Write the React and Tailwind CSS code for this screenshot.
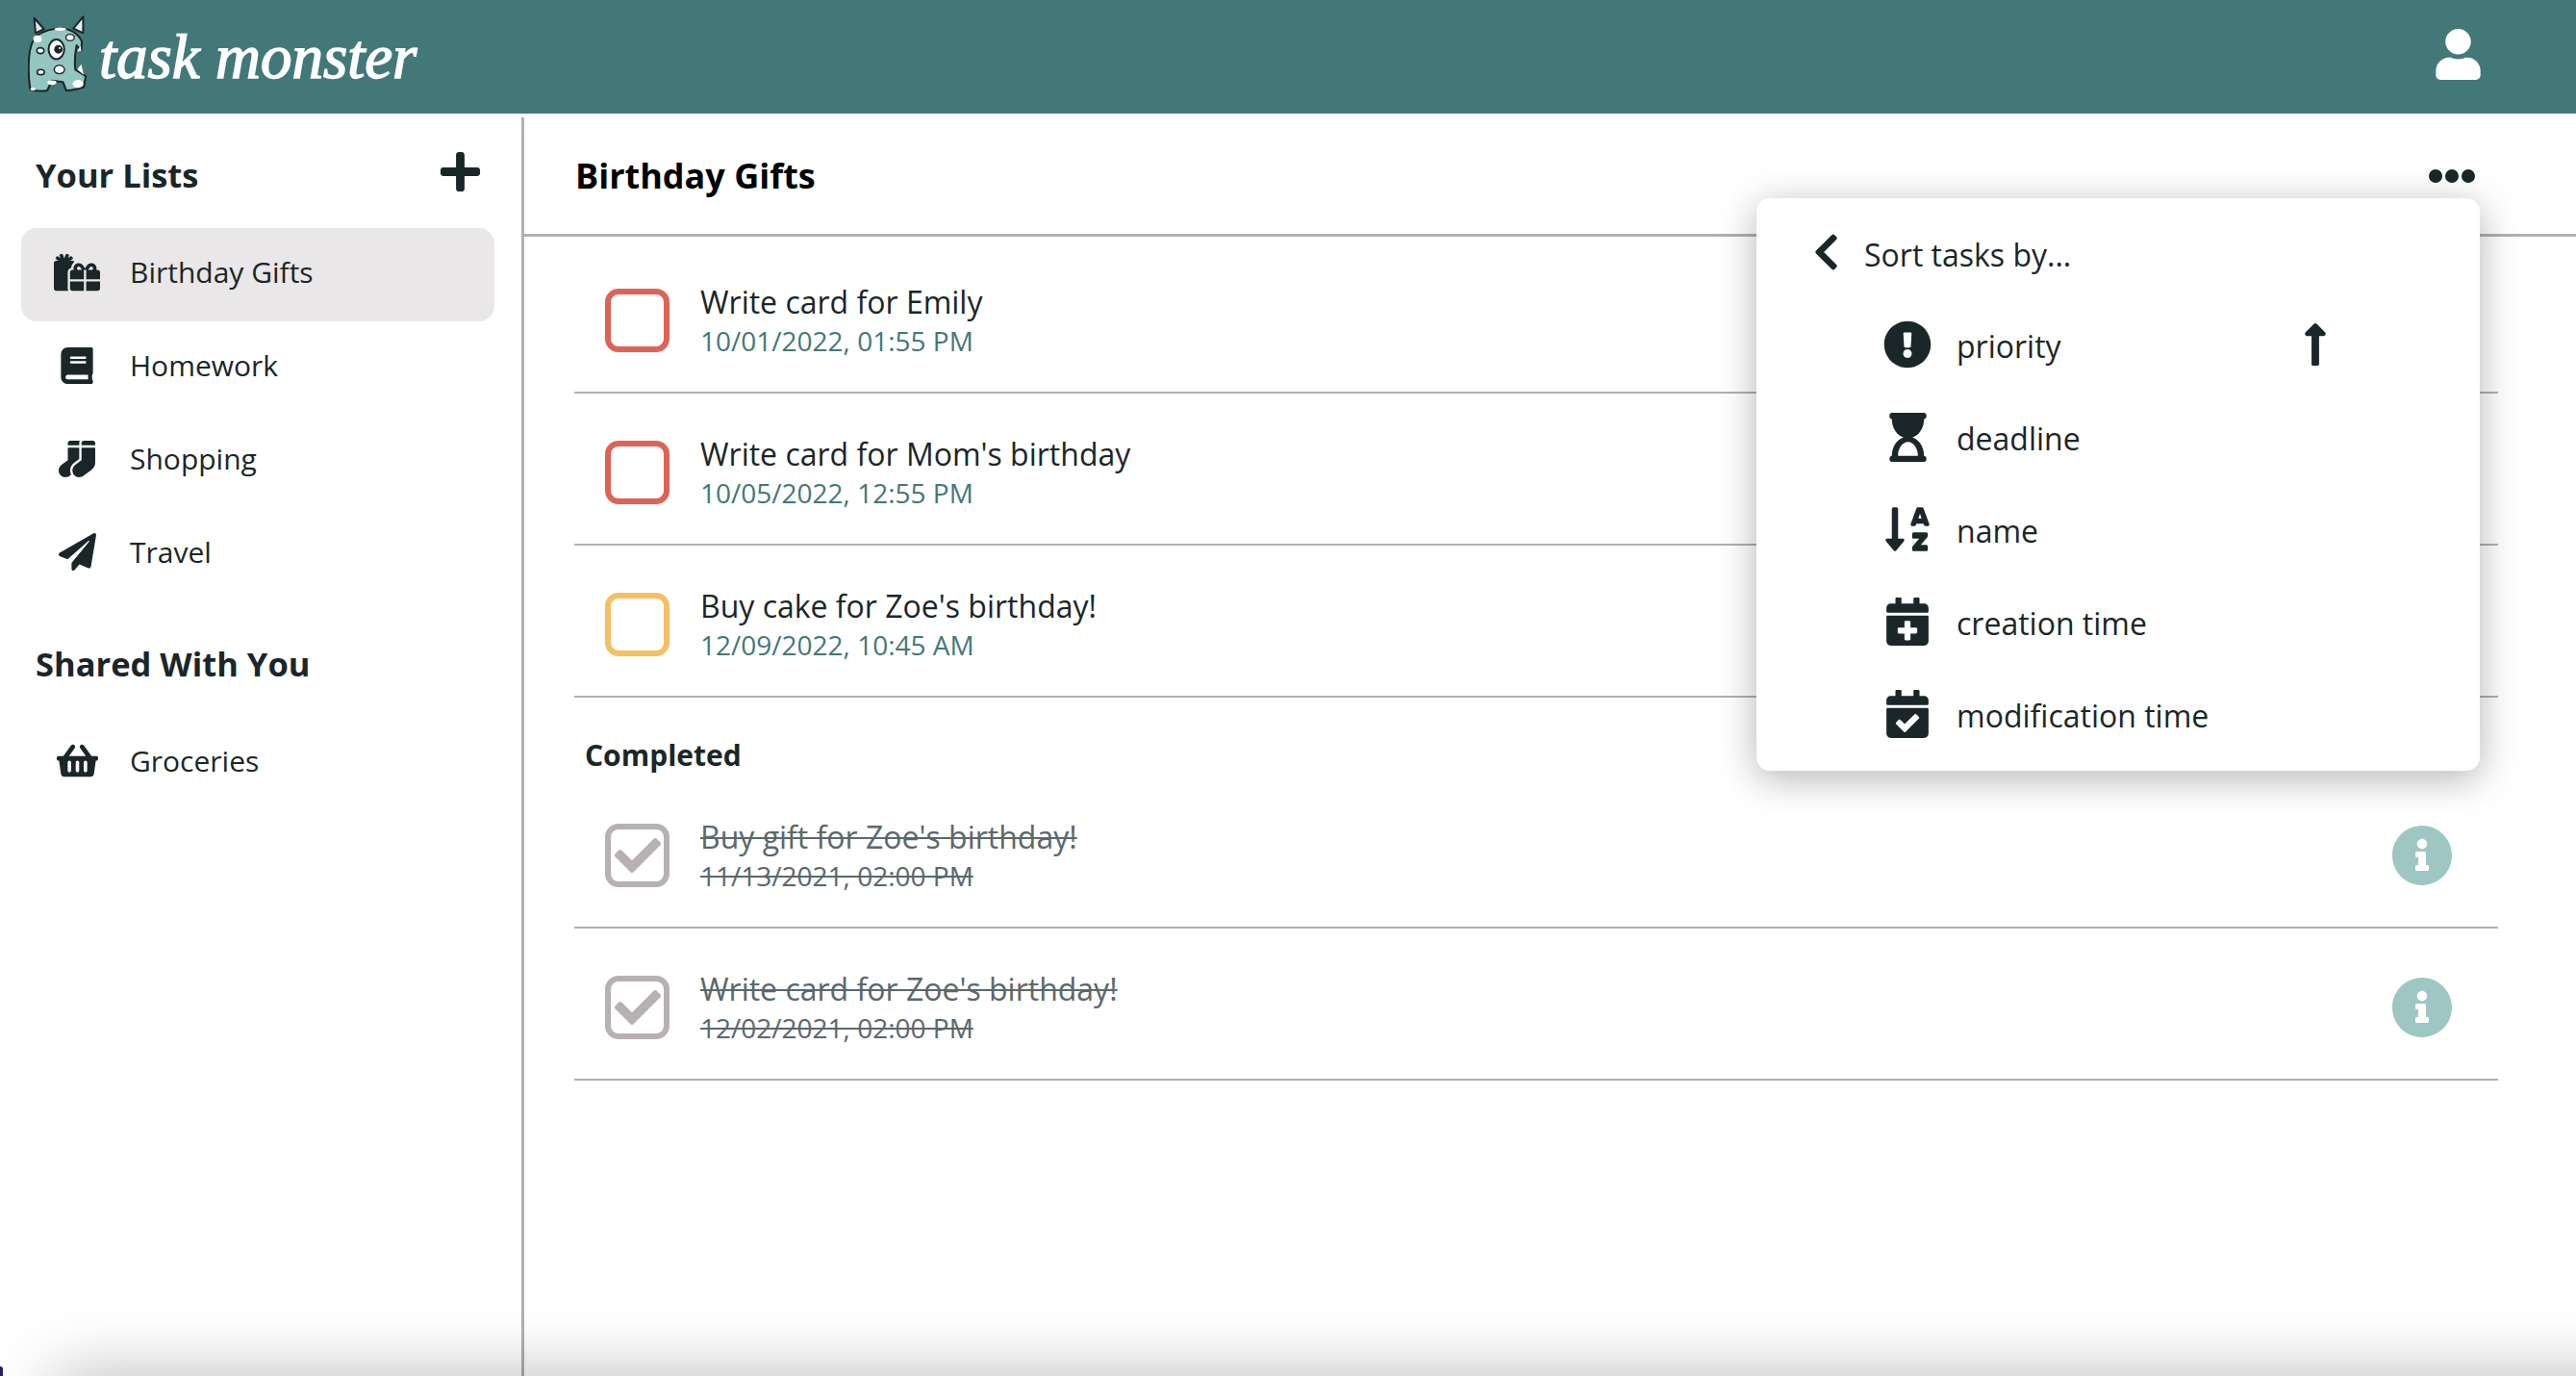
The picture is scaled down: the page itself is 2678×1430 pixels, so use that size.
import React from "react";
import {
  FaGifts, FaBook, FaSocks, FaPaperPlane, FaShoppingBasket, FaPlus, FaUser,
  FaChevronLeft, FaExclamationCircle, FaHourglassStart, FaSortAlphaDown,
  FaCalendarPlus, FaCalendarCheck, FaLongArrowAltUp, FaInfoCircle, FaCheck,
} from "react-icons/fa";

function Monster() {
  return (
    <svg width="62" height="80" viewBox="30 20 180 236" className="shrink-0 -mt-[6px]">
      <path d="M48 28 L78 62 L52 74 Z" fill="#dfeeec" stroke="#1b2628" strokeWidth="6" strokeLinejoin="round" />
      <path d="M198 24 L198 74 L168 60 Z" fill="#dfeeec" stroke="#1b2628" strokeWidth="6" strokeLinejoin="round" />
      <path d="M36 248 Q28 200 32 150 Q36 100 56 82 Q90 60 130 60 Q175 62 194 100 L192 128 L178 112 Q170 150 174 186 L206 206 L200 240 Q170 250 146 250 L136 224 L102 220 L88 250 Q60 254 36 248 Z" fill="#93c5c1" stroke="#1b2628" strokeWidth="6" strokeLinejoin="round" />
      <ellipse cx="116" cy="124" rx="24" ry="30" fill="#fff" stroke="#1b2628" strokeWidth="6" />
      <circle cx="122" cy="124" r="13" fill="#1b2628" />
      <circle cx="126" cy="120" r="3" fill="#fff" />
      <ellipse cx="67" cy="128" rx="11" ry="9" fill="#fff" stroke="#1b2628" strokeWidth="5" />
      <ellipse cx="158" cy="88" rx="13" ry="10" fill="#fff" stroke="#1b2628" strokeWidth="4" />
      <ellipse cx="58" cy="92" rx="13" ry="11" fill="#fff" />
      <ellipse cx="68" cy="194" rx="11" ry="8" fill="#fff" stroke="#1b2628" strokeWidth="5" />
      <ellipse cx="125" cy="186" rx="16" ry="13" fill="#fff" stroke="#1b2628" strokeWidth="4" />
      <ellipse cx="182" cy="230" rx="16" ry="12" fill="#fff" />
      <ellipse cx="102" cy="226" rx="14" ry="7" fill="#fff" />
      <ellipse cx="128" cy="62" rx="18" ry="5" fill="#fff" />
      <ellipse cx="44" cy="246" rx="8" ry="5" fill="#fff" />
      <path d="M180 186 L192 170 L200 202 Z" fill="#fff" />
      <path d="M180 130 L190 112 L192 130 Z" fill="#fff" />
    </svg>
  );
}

function SideItem({ icon, label, active }) {
  return (
    <div className={`ml-[22px] w-[492px] h-[97px] rounded-[16px] pl-[34px] pb-[6px] flex items-center gap-[31px] ${active ? "bg-[#eae7e8]" : ""}`}>
      <span className="w-[48px] flex justify-center text-[#1b2628]">{icon}</span>
      <span className="text-[30px] leading-[40px] text-[#1b2628]">{label}</span>
    </div>
  );
}

function Task({ title, date, color }) {
  return (
    <div className="ml-[52px] w-[2000px] h-[158px] border-b-2 border-[#b5aeb0] pt-[8px] pl-[32px] flex items-center gap-[32px]">
      <div className={`w-[67px] h-[66px] rounded-[14px] border-[6px] ${color}`} />
      <div className="flex flex-col">
        <span className="text-[32px] leading-[41px] text-[#1b2628]">{title}</span>
        <span className="text-[28px] leading-[40px] text-[#437878]">{date}</span>
      </div>
    </div>
  );
}

function DoneTask({ title, date }) {
  return (
    <div className="ml-[52px] w-[2000px] h-[158px] border-b-2 border-[#b5aeb0] pt-[8px] pl-[32px] pr-[47px] flex items-center gap-[32px]">
      <div className="w-[67px] h-[66px] rounded-[14px] border-[6px] border-[#b8b1b3] flex items-center justify-center text-[#b8b1b3]">
        <FaCheck size={48} />
      </div>
      <div className="flex flex-col text-[#5b686b] line-through decoration-2 flex-1">
        <span className="text-[32px] leading-[41px]">{title}</span>
        <span className="text-[28px] leading-[40px]">{date}</span>
      </div>
      <FaInfoCircle size={64} className="text-[#9ec7c3] -mt-[1px]" />
    </div>
  );
}

function SortRow({ icon, label, extra }) {
  return (
    <div className="h-[96px] pl-[127px] flex items-center gap-[21px]">
      <span className="w-[60px] flex justify-center text-[#1b2628] pb-[4px]">{icon}</span>
      <span className="w-[327px] text-[32px] leading-[40px] text-[#1b2628]">{label}</span>
      {extra}
    </div>
  );
}

export default function App() {
  return (
    <div className="relative w-full h-[1430px] overflow-hidden bg-white flex flex-col font-['Open_Sans',sans-serif]">
      <header className="h-[118px] shrink-0 bg-[#437878] flex items-center justify-between pl-[29px] pr-[96px]">
        <div className="flex items-center gap-[12px]">
          <Monster />
          <span className="font-['Liberation_Serif',serif] italic text-[65px] leading-[80px] text-white [-webkit-text-stroke:1.5px_white]">task monster</span>
        </div>
        <FaUser size={53} className="text-white -mt-[5px]" />
      </header>

      <div className="flex flex-1 pt-[4px] min-h-0">
        <aside className="w-[545px] shrink-0 border-r-[3px] border-[#b5aeb0]">
          <div className="h-[115px] pt-[38px] pl-[37px] pr-[40px] flex items-start justify-between">
            <h2 className="text-[34.5px] leading-[44px] font-bold text-[#1b2628]">Your Lists</h2>
            <FaPlus size={47} className="text-[#1b2628] -mt-[5px]" />
          </div>
          <SideItem active icon={<FaGifts size={48} />} label="Birthday Gifts" />
          <SideItem icon={<FaBook size={38} />} label="Homework" />
          <SideItem icon={<FaSocks size={38} />} label="Shopping" />
          <SideItem icon={<FaPaperPlane size={39} />} label="Travel" />
          <h2 className="mt-[43px] mb-[33px] pl-[37px] text-[34.5px] leading-[44px] font-bold text-[#1b2628]">Shared With You</h2>
          <SideItem icon={<FaShoppingBasket size={43} />} label="Groceries" />
        </aside>

        <main className="flex-1 min-w-0">
          <div className="h-[124px] border-b-[3px] border-[#b5aeb0] pl-[53px] pr-[105px] flex items-center justify-between">
            <h1 className="text-[36px] leading-[44px] font-bold text-black">Birthday Gifts</h1>
            <div className="flex gap-[3px]">
              <span className="w-[14px] h-[14px] rounded-full bg-[#1b2628]" />
              <span className="w-[14px] h-[14px] rounded-full bg-[#1b2628]" />
              <span className="w-[14px] h-[14px] rounded-full bg-[#1b2628]" />
            </div>
          </div>
          <div className="pt-[5px]">
            <Task title="Write card for Emily" date="10/01/2022, 01:55 PM" color="border-[#de6256]" />
            <Task title="Write card for Mom's birthday" date="10/05/2022, 12:55 PM" color="border-[#de6256]" />
            <Task title="Buy cake for Zoe's birthday!" date="12/09/2022, 10:45 AM" color="border-[#f6bf63]" />
            <div className="h-[82px] pt-[38px] pl-[63px]">
              <h3 className="text-[30px] leading-[44px] font-bold text-[#1b2628]">Completed</h3>
            </div>
            <DoneTask title="Buy gift for Zoe's birthday!" date="11/13/2021, 02:00 PM" />
            <DoneTask title="Write card for Zoe's birthday!" date="12/02/2021, 02:00 PM" />
          </div>
        </main>
      </div>

      <div className="absolute left-[1826px] top-[206px] w-[752px] h-[595px] bg-white rounded-[14px] shadow-[0_8px_40px_rgba(0,0,0,0.3)]">
        <div className="pt-[35px] pl-[59px] h-[106px] flex items-start gap-[26px]">
          <span className="w-[27px] h-[48px] -mt-[3px] flex items-center justify-center text-[#1b2628]"><FaChevronLeft size={50} /></span>
          <span className="text-[32px] leading-[48px] text-[#1b2628]">Sort tasks by...</span>
        </div>
        <SortRow icon={<FaExclamationCircle size={50} />} label="priority" extra={<FaLongArrowAltUp size={50} className="text-[#1b2628] -mt-[4px]" />} />
        <SortRow icon={<FaHourglassStart size={51} />} label="deadline" />
        <SortRow icon={<FaSortAlphaDown size={52} />} label="name" />
        <SortRow icon={<FaCalendarPlus size={50} />} label="creation time" />
        <SortRow icon={<FaCalendarCheck size={50} />} label="modification time" />
      </div>

      <div className="absolute left-[50px] -right-[200px] top-full h-[60px] rounded-[40px] shadow-[0_0_70px_rgba(0,0,0,0.3)] pointer-events-none" />
      <div className="absolute left-0 bottom-0 w-[3px] h-[10px] bg-[#2b1b6b] rounded-tr-[3px]" />
    </div>
  );
}
